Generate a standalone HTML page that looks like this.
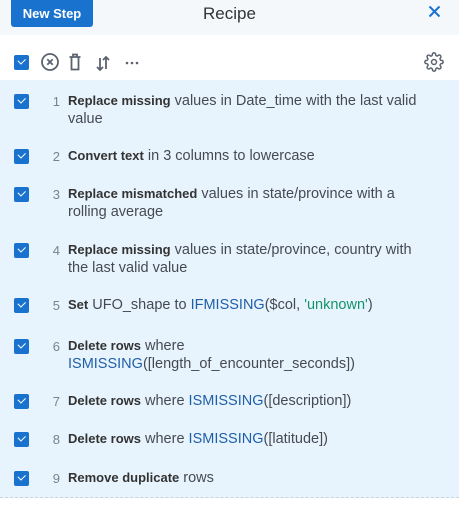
<!DOCTYPE html>
<html><head><style>
*{margin:0;padding:0;box-sizing:border-box}
body{width:459px;height:505px;background:#fff;font-family:"Liberation Sans",sans-serif;position:relative;overflow:hidden;color:#3d4047}
.hdr{position:absolute;left:0;top:0;width:459px;height:35px;background:#f5f8fb}
.btn{position:absolute;left:11px;top:0;width:82px;height:27px;background:#1a72cf;border-radius:0 0 3px 3px;color:#fff;font-weight:bold;font-size:13px;line-height:27px;text-align:center}
.title{position:absolute;left:0;width:459px;top:4px;text-align:center;font-size:17px;color:#333}
.list{position:absolute;left:0;top:80px;width:459px;height:418px;background:#e8f4fd;border-bottom:1px dashed #c8d4de}
.cb{position:absolute;left:14px;width:15px;height:15px;background:#1a72cf;border-radius:2px}
.cb:after{content:"";position:absolute;left:4px;top:3px;width:6px;height:3.5px;border-left:1.6px solid #fff;border-bottom:1.6px solid #fff;transform:rotate(-45deg)}
.n{position:absolute;left:50px;width:10px;text-align:right;font-size:13px;color:#7a8090;line-height:18px;margin-top:1px}
.t{position:absolute;left:68px;font-size:14.5px;line-height:18px;white-space:nowrap;color:#454a52;letter-spacing:0;margin-top:1px}
.t b{font-size:13px;color:#333}
.bl{color:#1f5fa8}.gr{color:#16936a}
</style></head><body>
<div class="hdr"><div class="btn">New Step</div><div class="title">Recipe</div>
<svg style="position:absolute;left:428px;top:5px" width="13" height="13" viewBox="0 0 13 13"><path d="M1.5 1.5L11.5 11.5M11.5 1.5L1.5 11.5" stroke="#1a72cf" stroke-width="2"/></svg></div>
<div class="cb" style="top:55px"></div>
<svg style="position:absolute;left:40px;top:52px" width="104" height="21" viewBox="0 0 104 21" fill="none" stroke="#5c6370" stroke-width="1.8">
<circle cx="10" cy="10" r="8"/><path d="M7.3 7.3L12.7 12.7M12.7 7.3L7.3 12.7"/>
<path d="M29.5 5h11M33 5V2.5h4V5M31.5 5v12.5h7V5"/>
<path d="M60 6v12M57 15l3 3 3-3M66 17V5M63 8l3-3 3 3"/>
<circle cx="87" cy="11" r="1.3" fill="#5c6370" stroke="none"/><circle cx="92" cy="11" r="1.3" fill="#5c6370" stroke="none"/><circle cx="97" cy="11" r="1.3" fill="#5c6370" stroke="none"/>
</svg>
<svg style="position:absolute;left:424px;top:52px" width="20" height="20" viewBox="0 0 24 24" fill="none" stroke="#5c6370" stroke-width="1.8"><circle cx="12" cy="12" r="3"/><path d="M19.4 15a1.650 1.650 0 0 0 .33 1.82l.06.06a2 2 0 1 1-2.830 2.83l-.06-.06a1.65 1.65 0 0 0-1.82-.33 1.65 1.65 0 0 0-1 1.51V21a2 2 0 1 1-4 0v-.09A1.65 1.65 0 0 0 9 19.4a1.65 1.65 0 0 0-1.82.33l-.06.06a2 2 0 1 1-2.83-2.83l.06-.06A1.65 1.65 0 0 0 4.68 15a1.65 1.65 0 0 0-1.51-1H3a2 2 0 1 1 0-4h.09A1.65 1.65 0 0 0 4.6 9a1.65 1.65 0 0 0-.33-1.82l-.06-.06a2 2 0 1 1 2.83-2.83l.06.06A1.65 1.65 0 0 0 9 4.68 1.65 1.65 0 0 0 10 3.17V3a2 2 0 1 1 4 0v.09a1.65 1.65 0 0 0 1 1.51 1.65 1.65 0 0 0 1.82-.33l.06-.06a2 2 0 1 1 2.83 2.830l-.06.06A1.65 1.65 0 0 0 19.4 9c.2.6.8 1 1.51 1H21a2 2 0 1 1 0 4h-.09a1.65 1.65 0 0 0-1.51 1z"/></svg>
<div class="list"></div>

<div class="cb" style="top:94px"></div><div class="n" style="top:92px">1</div>
<div class="t" style="top:91px"><b>Replace missing</b> values in Date_time with the last valid<br>value</div>
<div class="cb" style="top:149px"></div><div class="n" style="top:147px">2</div>
<div class="t" style="top:146px"><b>Convert text</b> in 3 columns to lowercase</div>
<div class="cb" style="top:187px"></div><div class="n" style="top:185px">3</div>
<div class="t" style="top:184px"><b>Replace mismatched</b> values in state/province with a<br>rolling average</div>
<div class="cb" style="top:243px"></div><div class="n" style="top:241px">4</div>
<div class="t" style="top:240px"><b>Replace missing</b> values in state/province, country with<br>the last valid value</div>
<div class="cb" style="top:298px"></div><div class="n" style="top:296px">5</div>
<div class="t" style="top:295px"><b>Set</b> UFO_shape to <span class="bl">IFMISSING</span>($col, <span class="gr">'unknown'</span>)</div>
<div class="cb" style="top:339px"></div><div class="n" style="top:337px">6</div>
<div class="t" style="top:336px"><b>Delete rows</b> where<br><span class="bl">ISMISSING</span>([length_of_encounter_seconds])</div>
<div class="cb" style="top:394px"></div><div class="n" style="top:392px">7</div>
<div class="t" style="top:391px"><b>Delete rows</b> where <span class="bl">ISMISSING</span>([description])</div>
<div class="cb" style="top:432px"></div><div class="n" style="top:430px">8</div>
<div class="t" style="top:429px"><b>Delete rows</b> where <span class="bl">ISMISSING</span>([latitude])</div>
<div class="cb" style="top:471px"></div><div class="n" style="top:469px">9</div>
<div class="t" style="top:468px"><b>Remove duplicate</b> rows</div>
</body></html>
